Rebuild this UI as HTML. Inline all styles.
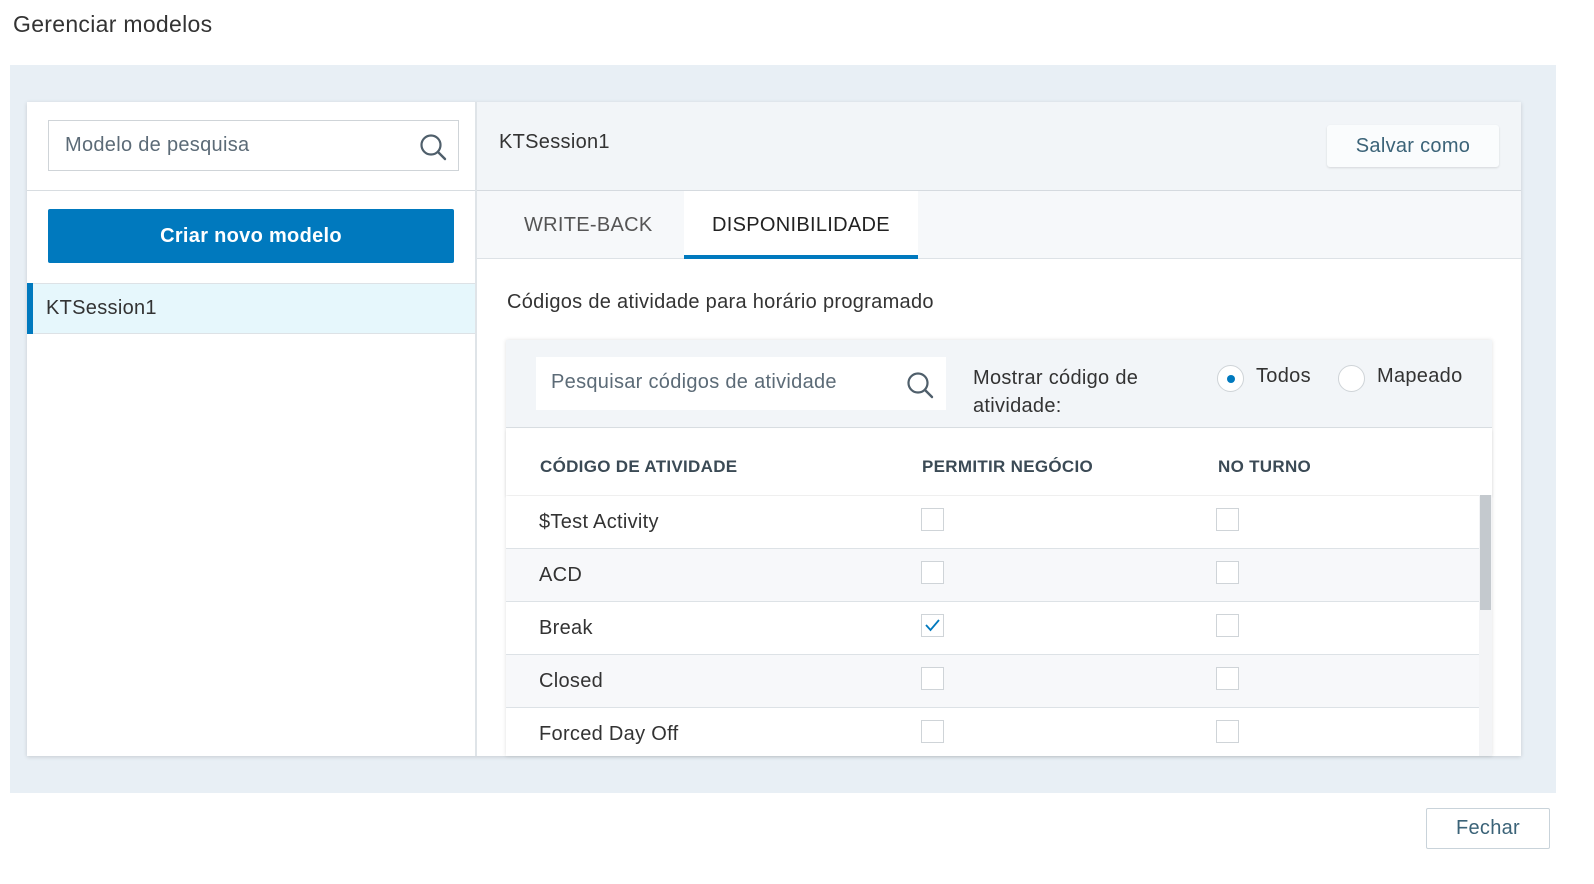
<!DOCTYPE html>
<html><head><meta charset="utf-8"><style>
*{box-sizing:border-box;margin:0;padding:0}
html{overflow:hidden}
body{width:1594px;height:884px;background:#fff;font-family:"Liberation Sans",Arial,sans-serif;color:#333;position:relative;overflow:hidden;letter-spacing:0.3px}
.a{position:absolute}
.cb{position:absolute;width:23px;height:23px;border:1px solid #cfd4d8;background:#fff}
.row{position:absolute;left:506px;width:973px;height:53px;border-bottom:1px solid #dde2e6;font-size:20px;color:#333}
.row span{position:absolute;left:33px;top:15px}
</style></head><body>
<div class="a" style="left:13px;top:11px;font-size:23px;color:#333">Gerenciar modelos</div>
<div class="a" style="left:10px;top:65px;width:1546px;height:728px;background:#e8eff5"></div>
<div class="a" style="left:27px;top:102px;width:1494px;height:654px;background:#fff;box-shadow:0 1px 4px rgba(0,0,0,.15)"></div>
<div class="a" style="left:48px;top:120px;width:411px;height:51px;border:1px solid #cfd4d8;background:#fff"></div>
<div class="a" style="left:65px;top:134px;font-size:20px;color:#5c6b77">Modelo de pesquisa</div>
<svg class="a" style="left:418px;top:132px" width="30" height="30" viewBox="0 0 30 30"><circle cx="13" cy="13" r="9.5" fill="none" stroke="#4f5f6b" stroke-width="2.2"/><line x1="20" y1="20" x2="27" y2="27" stroke="#4f5f6b" stroke-width="2.4" stroke-linecap="round"/></svg>
<div class="a" style="left:27px;top:190px;width:449px;height:1px;background:#d8dde1"></div>
<div class="a" style="left:48px;top:209px;width:406px;height:54px;background:#0079be;border-radius:2px;color:#fff;font-size:20px;font-weight:bold;text-align:center;line-height:54px">Criar novo modelo</div>
<div class="a" style="left:27px;top:283px;width:449px;height:51px;background:#e6f7fc;border-top:1px solid #dde2e6;border-bottom:1px solid #dde2e6"></div>
<div class="a" style="left:27px;top:283px;width:6px;height:51px;background:#0079be"></div>
<div class="a" style="left:46px;top:297px;font-size:20px;color:#333">KTSession1</div>
<div class="a" style="left:475px;top:102px;width:2px;height:654px;background:#dfe4e8"></div>
<div class="a" style="left:477px;top:102px;width:1044px;height:89px;background:#f2f5f8;border-bottom:1px solid #d5dadf"></div>
<div class="a" style="left:499px;top:131px;font-size:20px;color:#333">KTSession1</div>
<div class="a" style="left:1327px;top:125px;width:172px;height:42px;background:#fafcfd;border-radius:3px;box-shadow:0 1px 2px rgba(0,0,0,.12);color:#3b6378;font-size:20px;text-align:center;line-height:42px">Salvar como</div>
<div class="a" style="left:477px;top:191px;width:1044px;height:68px;background:#f6f8fa;border-bottom:1px solid #dde2e6"></div>
<div class="a" style="left:524px;top:214px;font-size:20px;color:#555">WRITE-BACK</div>
<div class="a" style="left:684px;top:191px;width:234px;height:68px;background:#fff;border-bottom:4px solid #0079be"></div>
<div class="a" style="left:684px;top:214px;width:234px;text-align:center;font-size:20px;color:#222">DISPONIBILIDADE</div>
<div class="a" style="left:507px;top:291px;font-size:20px;color:#333">Códigos de atividade para horário programado</div>
<div class="a" style="left:506px;top:340px;width:986px;height:416px;background:#fff;box-shadow:0 0 4px rgba(0,0,0,.12)"></div>
<div class="a" style="left:506px;top:340px;width:986px;height:88px;background:#f2f5f8;border-bottom:1px solid #d8dde1"></div>
<div class="a" style="left:536px;top:357px;width:410px;height:53px;background:#fff"></div>
<div class="a" style="left:551px;top:371px;font-size:20px;color:#5c6b77">Pesquisar códigos de atividade</div>
<svg class="a" style="left:905px;top:370px" width="30" height="30" viewBox="0 0 30 30"><circle cx="13" cy="13" r="9.5" fill="none" stroke="#4f5f6b" stroke-width="2.2"/><line x1="20" y1="20" x2="27" y2="27" stroke="#4f5f6b" stroke-width="2.4" stroke-linecap="round"/></svg>
<div class="a" style="left:973px;top:364px;font-size:20px;line-height:28px;color:#333">Mostrar código de<br>atividade:</div>
<div class="a" style="left:1217px;top:365px;width:27px;height:27px;border-radius:50%;border:1px solid #cfd4d8;background:#fff"></div>
<div class="a" style="left:1227px;top:375px;width:8px;height:8px;border-radius:50%;background:#0079be"></div>
<div class="a" style="left:1256px;top:365px;font-size:20px">Todos</div>
<div class="a" style="left:1338px;top:365px;width:27px;height:27px;border-radius:50%;border:1px solid #cfd4d8;background:#fff"></div>
<div class="a" style="left:1377px;top:365px;font-size:20px">Mapeado</div>
<div class="a" style="left:506px;top:429px;width:986px;height:66px;background:#fff;box-shadow:0 2px 3px rgba(0,0,0,.08)"></div>
<div class="a" style="left:540px;top:457px;font-size:17px;font-weight:bold;color:#3b4a55">CÓDIGO DE ATIVIDADE</div>
<div class="a" style="left:922px;top:457px;font-size:17px;font-weight:bold;color:#3b4a55">PERMITIR NEGÓCIO</div>
<div class="a" style="left:1218px;top:457px;font-size:17px;font-weight:bold;color:#3b4a55">NO TURNO</div>
<div class="row" style="top:496px;background:#fff"><span>$Test Activity</span></div>
<div class="row" style="top:549px;background:#f7f8fa"><span>ACD</span></div>
<div class="row" style="top:602px;background:#fff"><span>Break</span></div>
<div class="row" style="top:655px;background:#f7f8fa"><span>Closed</span></div>
<div class="row" style="top:708px;height:48px;background:#fff;border:none"><span>Forced Day Off</span></div>
<div class="cb" style="left:921px;top:508px"></div><div class="cb" style="left:1216px;top:508px"></div>
<div class="cb" style="left:921px;top:561px"></div><div class="cb" style="left:1216px;top:561px"></div>
<div class="cb" style="left:921px;top:614px"><svg width="21" height="21" viewBox="0 0 21 21"><path d="M4 10 L8.5 15 L17 5" fill="none" stroke="#0079be" stroke-width="1.8"/></svg></div><div class="cb" style="left:1216px;top:614px"></div>
<div class="cb" style="left:921px;top:667px"></div><div class="cb" style="left:1216px;top:667px"></div>
<div class="cb" style="left:921px;top:720px"></div><div class="cb" style="left:1216px;top:720px"></div>
<div class="a" style="left:1479px;top:495px;width:13px;height:261px;background:#f3f4f6"></div>
<div class="a" style="left:1480px;top:495px;width:11px;height:115px;background:#c4c9ce"></div>
<div class="a" style="left:1426px;top:808px;width:124px;height:41px;border:1px solid #c9d3da;border-radius:2px;background:#fff;color:#3b6378;font-size:20px;text-align:center;line-height:39px">Fechar</div>
</body></html>
